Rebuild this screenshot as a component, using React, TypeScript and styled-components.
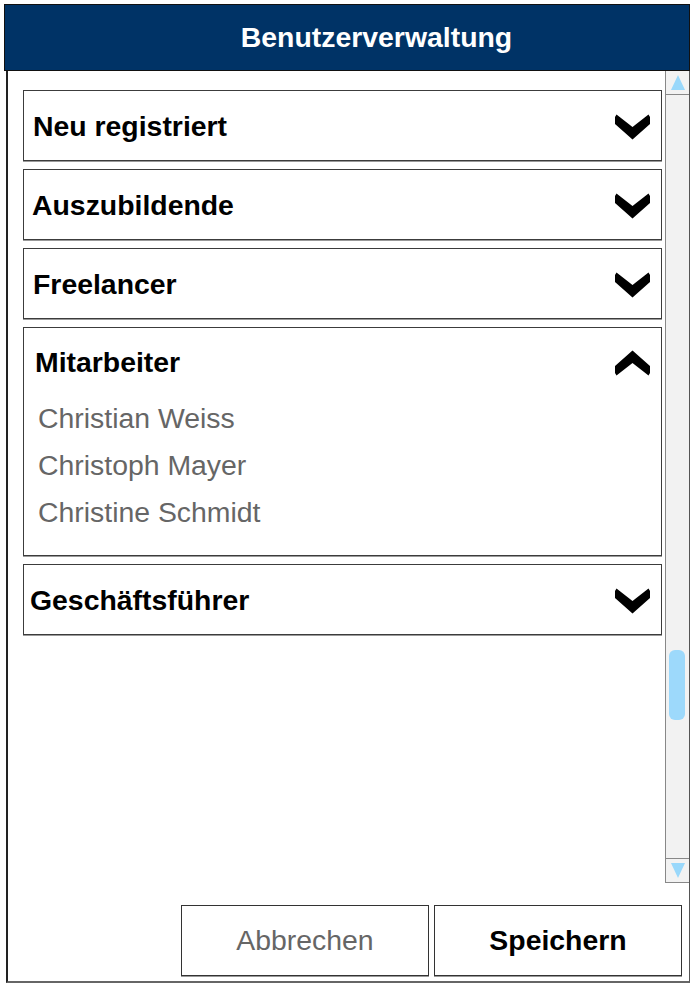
import React from "react";
import styled, { createGlobalStyle } from "styled-components";

const Global = createGlobalStyle`
  html, body { margin: 0; padding: 0; background: #ffffff; }
  body { font-family: "Liberation Sans", Arial, sans-serif; }
  * { box-sizing: border-box; }
`;

const Window = styled.div`
  margin: 4px 0 0 4px;
  width: 686px;
`;

const Header = styled.header`
  height: 67px;
  background: #003366;
  border: 1px solid #111;
  display: flex;
  align-items: center;
  justify-content: center;
  padding-left: 59px;
  color: #ffffff;
  font-size: 28.4px;
  font-weight: 700;
`;

const Frame = styled.div`
  margin-left: 2px;
  width: 684px;
  border-left: 2px solid #222;
  border-right: 1px solid #555;
  border-bottom: 2px solid #666;
  display: grid;
  grid-template-columns: 1fr 24px;
  grid-template-rows: 812px auto;
`;

const List = styled.div`
  padding: 19px 3px 0 15px;
  display: flex;
  flex-direction: column;
  gap: 8px;
`;

const Card = styled.section<{ $inset: number }>`
  border: 1px solid #3c3c3c;
  box-shadow: 0 1px 0 #9a9a9a;
  background: #fff;
  --inset: ${(p) => p.$inset}px;
`;

const CardHead = styled.div<{ $h: number }>`
  height: ${(p) => p.$h}px;
  display: flex;
  align-items: center;
  justify-content: space-between;
  padding: 2px 11px 0 var(--inset);
`;

const Title = styled.span`
  font-size: 28.4px;
  font-weight: 700;
  color: #000;
`;

const Names = styled.ul`
  list-style: none;
  margin: 0;
  padding: 0 0 19px 14px;
`;

const Name = styled.li`
  font-size: 28.4px;
  line-height: 47px;
  color: #666;
`;

const Scrollbar = styled.div`
  grid-column: 2;
  grid-row: 1;
  display: flex;
  flex-direction: column;
  background: #f2f2f2;
  border-left: 1px solid #888;
  border-bottom: 1px solid #888;
`;

const ArrowBox = styled.div<{ $down?: boolean }>`
  height: 24px;
  display: flex;
  align-items: center;
  justify-content: center;
  background: #f2f2f2;
  border-${(p) => (p.$down ? "top" : "bottom")}: 1px solid #888;
`;

const Track = styled.div`
  flex: 1;
  padding: 0 4px 0 3px;
`;

const Thumb = styled.div`
  margin-top: 555px;
  width: 16px;
  height: 70px;
  border-radius: 6px;
  background: #9dd9fb;
`;

const Footer = styled.div`
  grid-column: 1 / span 2;
  grid-row: 2;
  display: flex;
  justify-content: flex-end;
  gap: 5px;
  padding: 22px 7px 5px 0;
`;

const Button = styled.button<{ $primary?: boolean }>`
  width: 248px;
  height: 71px;
  background: #fff;
  border: 1px solid #333;
  box-shadow: 0 1px 0 #999;
  font-family: "Liberation Sans", Arial, sans-serif;
  font-size: 28.4px;
  font-weight: ${(p) => (p.$primary ? 700 : 400)};
  color: ${(p) => (p.$primary ? "#000" : "#666")};
  padding: 0;
`;

const Chevron = ({ up }: { up?: boolean }) => (
  <svg width="35" height="26" viewBox="0 0 35 26" style={{ transform: up ? "scaleY(-1)" : undefined }}>
    <polygon points="1.5,0.5 17.5,13 33.5,0.5 35,3 35,10 17.5,25.5 0,10 0,3" fill="#000" />
  </svg>
);

const Tri = ({ down }: { down?: boolean }) => (
  <svg width="14" height="15" viewBox="0 0 14 15">
    <polygon points={down ? "0,0 14,0 7,15" : "7,0 14,15 0,15"} fill="#99d8fb" />
  </svg>
);

const groups = [
  { title: "Neu registriert", inset: 9 },
  { title: "Auszubildende", inset: 8 },
  { title: "Freelancer", inset: 9 },
  { title: "Mitarbeiter", inset: 11, open: true, names: ["Christian Weiss", "Christoph Mayer", "Christine Schmidt"] },
  { title: "Geschäftsführer", inset: 6 },
];

export default function App() {
  return (
    <>
      <Global />
      <Window>
        <Header>Benutzerverwaltung</Header>
        <Frame>
          <List>
            {groups.map((g) => (
              <Card key={g.title} $inset={g.inset}>
                <CardHead $h={g.open ? 67 : 69}>
                  <Title>{g.title}</Title>
                  <Chevron up={g.open} />
                </CardHead>
                {g.open && g.names && (
                  <Names>
                    {g.names.map((n) => (
                      <Name key={n}>{n}</Name>
                    ))}
                  </Names>
                )}
              </Card>
            ))}
          </List>
          <Scrollbar>
            <ArrowBox>
              <Tri />
            </ArrowBox>
            <Track>
              <Thumb />
            </Track>
            <ArrowBox $down>
              <Tri down />
            </ArrowBox>
          </Scrollbar>
          <Footer>
            <Button>Abbrechen</Button>
            <Button $primary>Speichern</Button>
          </Footer>
        </Frame>
      </Window>
    </>
  );
}
